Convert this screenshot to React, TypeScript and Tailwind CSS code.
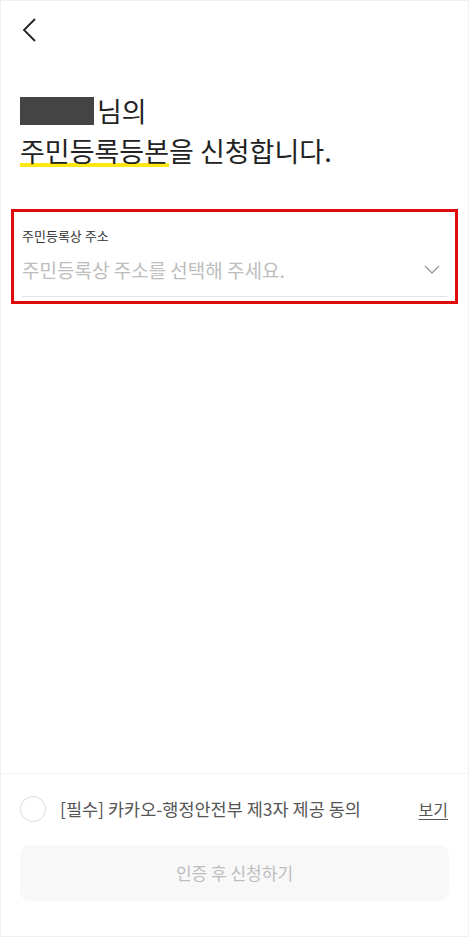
export default function App() {
  return (
    <div
      className="flex h-[937px] w-[469px] flex-col border border-[#f0f0f0] bg-white text-[#222]"
      style={{ fontFamily: '"Noto Sans CJK KR", "Noto Sans", sans-serif' }}
    >
      <div className="flex h-[58px] items-center pl-[20px]">
        <svg width="18" height="26" viewBox="0 0 18 26" fill="none">
          <path d="M14 2 L3 13 L14 24" stroke="#222" strokeWidth="1.8" />
        </svg>
      </div>

      <div className="mt-[32px] px-[19px] text-[27px] leading-[40px]">
        <div className="flex items-center">
          <span className="mr-[3px] inline-block h-[28px] w-[74px] bg-[#444]" />
          <span>님의</span>
        </div>
        <div>
          <span className="relative inline-block">
            <span className="absolute bottom-[4px] left-0 h-[4px] w-full bg-[#ffe812]" />
            <span className="relative">주민등록등본</span>
          </span>
          을 신청합니다.
        </div>
      </div>

      <div className="mx-[10px] mt-[38px] border-[3px] border-[#e00a0a] px-[8px] pt-[15px] pb-[4px]">
        <div className="text-[13px] leading-[18px] text-[#333]">주민등록상 주소</div>
        <div className="mt-[12px] flex items-center justify-between border-b border-[#e4e4e4] pb-[13px]">
          <span className="text-[19px] leading-[26px] text-[#bdbdbd]">주민등록상 주소를 선택해 주세요.</span>
          <svg className="mr-[7px]" width="16" height="10" viewBox="0 0 16 10" fill="none">
            <path d="M1 1 L8 8 L15 1" stroke="#999" strokeWidth="1.3" />
          </svg>
        </div>
      </div>

      <div className="flex-1" />

      <div className="border-t border-[#f2f2f2] px-[19px] pt-[22px] pb-[35px]">
        <div className="flex items-center">
          <span className="h-[26px] w-[26px] rounded-full border-[1.5px] border-[#dcdcdc]" />
          <span className="ml-[14px] flex-1 text-[17.5px] text-[#555]">[필수] 카카오-행정안전부 제3자 제공 동의</span>
          <span className="mr-[1px] text-[16px] text-[#555] underline underline-offset-[3px]">보기</span>
        </div>
        <div className="mt-[23px] flex h-[56px] items-center justify-center rounded-[10px] bg-[#f8f8f8] text-[17px] text-[#bdbdbd]">
          인증 후 신청하기
        </div>
      </div>
    </div>
  );
}
